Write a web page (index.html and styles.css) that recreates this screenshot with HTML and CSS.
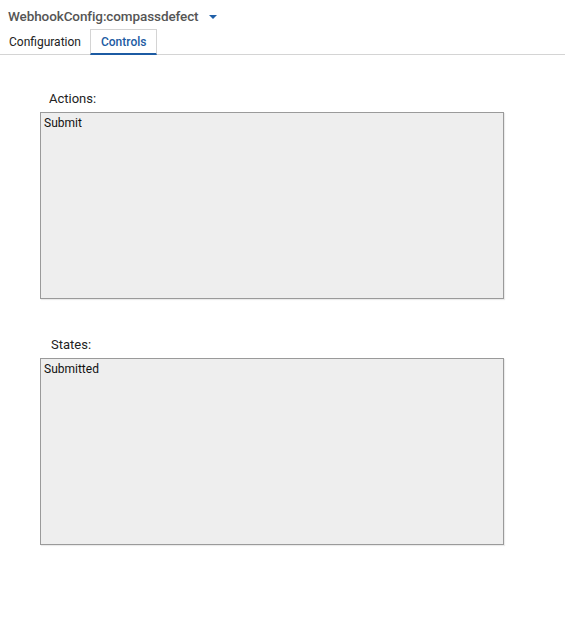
FILE: index.html
```html
<!DOCTYPE html>
<html>
<head>
<meta charset="utf-8">
<link rel="stylesheet" href="styles.css">
</head>
<body>
<div class="header">
  <span class="title">WebhookConfig:compassdefect</span>
  <span class="caret"></span>
</div>
<div class="tabs">
  <div class="tab">Configuration</div>
  <div class="tab active">Controls</div>
</div>
<div class="content">
  <div class="field">
    <div class="label label-actions">Actions:</div>
    <div class="box">Submit</div>
  </div>
  <div class="field">
    <div class="label label-states">States:</div>
    <div class="box">Submitted</div>
  </div>
</div>
</body>
</html>
```

FILE: styles.css
```css
html, body {
  margin: 0;
  padding: 0;
  background: #fff;
  font-family: Roboto, "Liberation Sans", sans-serif;
}
.header {
  display: flex;
  align-items: center;
  height: 29px;
  padding-left: 8px;
  padding-top: 2px;
  box-sizing: border-box;
}
.title {
  font-size: 13.5px;
  font-weight: 500;
  color: #555;
  letter-spacing: -0.1px;
}
.caret {
  width: 0;
  height: 0;
  margin-left: 10px;
  margin-top: 3px;
  border-left: 4px solid transparent;
  border-right: 4px solid transparent;
  border-top: 4px solid #1f5fa8;
}
.tabs {
  display: flex;
  height: 25px;
  border-bottom: 1px solid #d4d4d4;
}
.tab {
  font-size: 12px;
  color: #222;
  padding: 0 8px 0 8px;
  display: flex;
  align-items: center;
  box-sizing: border-box;
  border: 1px solid transparent;
  border-bottom: none;
}
.tab.active {
  color: #1c5ba3;
  font-weight: 500;
  border-color: #d4d4d4;
  border-bottom: 2px solid #1c5ba3;
  padding: 0 10px 0 10px;
  margin-bottom: -1px;
}
.content {
  padding-top: 36px;
  padding-left: 40px;
}
.field {
  margin-bottom: 38px;
}
.label {
  font-size: 13px;
  color: #222;
  height: 21px;
  line-height: 16px;
}
.label-actions { padding-left: 9px; }
.label-states { padding-left: 11px; }
.box {
  width: 464px;
  height: 187px;
  box-sizing: border-box;
  border: 1px solid #9a9a9a;
  background: #eeeeee;
  box-shadow: 1px 1px 1px rgba(0,0,0,0.08);
  font-size: 12px;
  line-height: 16px;
  color: #111;
  padding: 2px 3px;
  font-family: Roboto, "Liberation Sans", sans-serif;
}
```
